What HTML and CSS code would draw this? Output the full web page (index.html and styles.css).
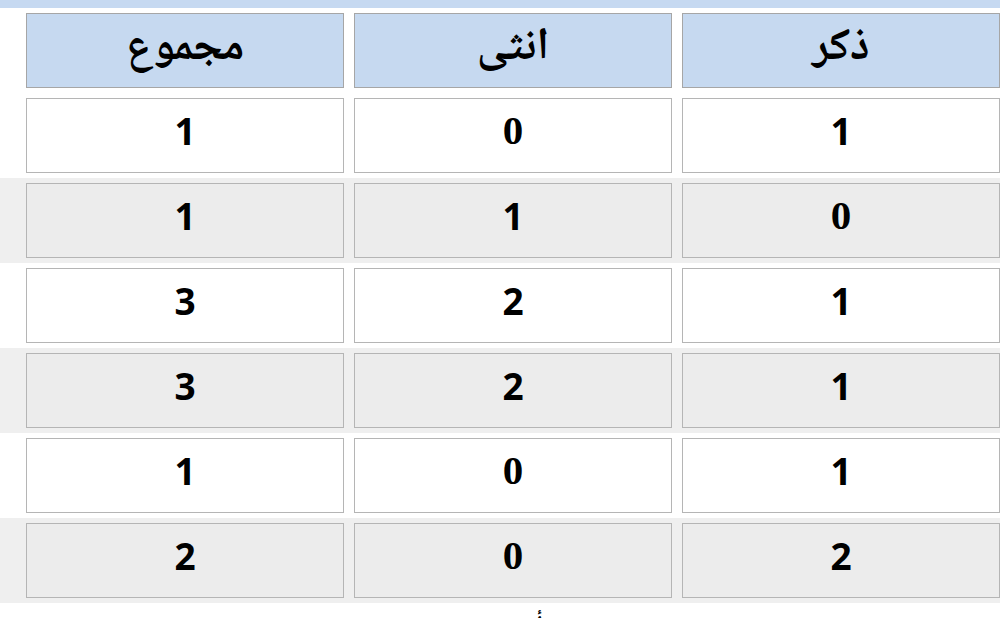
FILE: index.html
```html
<!DOCTYPE html>
<html lang="ar" dir="rtl">
<head>
<meta charset="utf-8">
<title>جدول</title>
<link rel="stylesheet" href="styles.css">
</head>
<body>
<div class="topbar"></div>
<div class="table">
  <div class="band">
    <div class="cell head">ذكر</div>
    <div class="cell head">انثى</div>
    <div class="cell head">مجموع</div>
  </div>
  <div class="band">
    <div class="cell">1</div>
    <div class="cell"><span class="z">0</span></div>
    <div class="cell">1</div>
  </div>
  <div class="band alt">
    <div class="cell"><span class="z">0</span></div>
    <div class="cell">1</div>
    <div class="cell">1</div>
  </div>
  <div class="band">
    <div class="cell">1</div>
    <div class="cell">2</div>
    <div class="cell">3</div>
  </div>
  <div class="band alt">
    <div class="cell">1</div>
    <div class="cell">2</div>
    <div class="cell">3</div>
  </div>
  <div class="band">
    <div class="cell">1</div>
    <div class="cell"><span class="z">0</span></div>
    <div class="cell">1</div>
  </div>
  <div class="band alt">
    <div class="cell">2</div>
    <div class="cell"><span class="z">0</span></div>
    <div class="cell">2</div>
  </div>
</div>
<p class="caption">أو من</p>
</body>
</html>
```

FILE: styles.css
```css
html, body {
  margin: 0;
  padding: 0;
  background: #ffffff;
}
body {
  width: 1000px;
  overflow: hidden;
  font-family: "Open Sans", "DejaVu Sans", sans-serif;
  color: #000;
}
.topbar {
  height: 8px;
  background: #c6d9f1;
}
.band {
  display: grid;
  grid-template-columns: repeat(3, 318px);
  column-gap: 10px;
  padding: 5px 0 5px 26px;
  background: #ffffff;
}
.band.alt {
  background: #efefef;
}
.cell {
  box-sizing: border-box;
  height: 75px;
  border: 1px solid #b5b5b5;
  background: #ffffff;
  display: flex;
  align-items: center;
  justify-content: center;
  font-family: "Open Sans", "DejaVu Sans", sans-serif;
  font-weight: 700;
  font-size: 37px;
  line-height: 1;
  padding-bottom: 10px;
}
.band.alt .cell {
  background: #ececec;
}
.cell.head {
  background: #c6d9f0;
  border-color: #a6a6a6;
  font-family: "Noto Naskh Arabic", "Noto Serif Arabic", "Amiri", "FreeSerif", "DejaVu Sans", serif;
  font-feature-settings: "liga" 0, "dlig" 0, "calt" 0;
  font-variant-ligatures: no-common-ligatures no-discretionary-ligatures no-contextual;
  font-size: 45px;
  padding-bottom: 2px;
}
.z {
  font-family: "Liberation Serif", serif;
  font-weight: 700;
  font-size: 41px;
}
.caption {
  margin: 0;
  padding: 4px 0 0 40px;
  text-align: center;
  font-family: "Noto Naskh Arabic", "Amiri", "FreeSerif", "DejaVu Sans", serif;
  font-weight: 700;
  font-size: 22px;
}
```
